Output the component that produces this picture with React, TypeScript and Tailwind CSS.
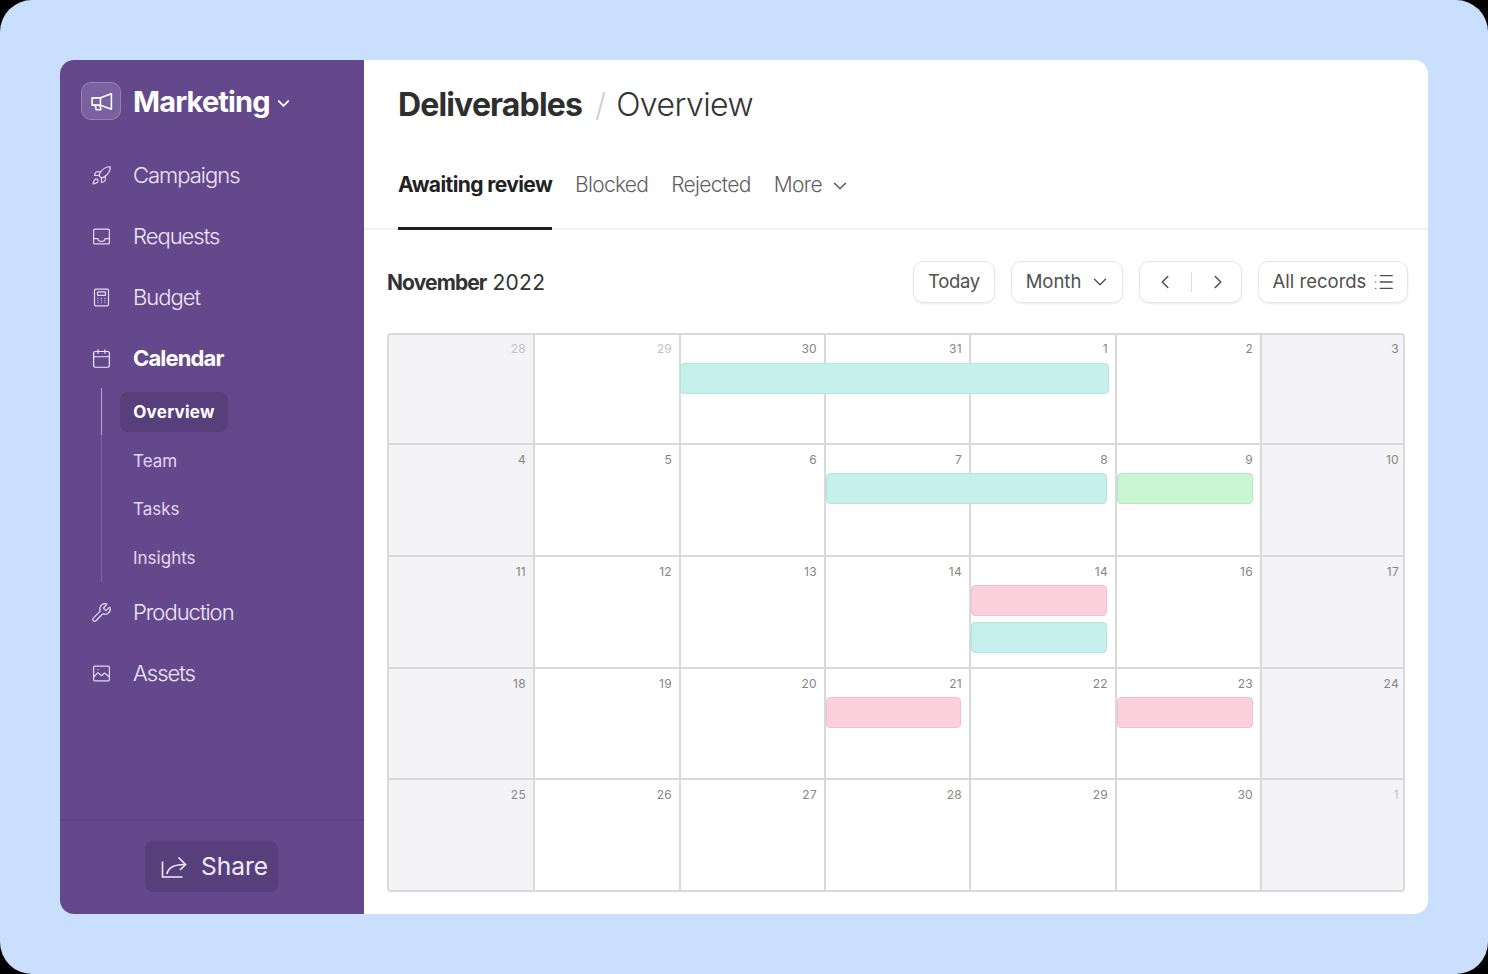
import { Calendar, ChevronDown, ChevronLeft, ChevronRight, List, Rocket, Wrench } from "lucide-react";
import type { SVGProps } from "react";

type IconProps = { size?: number; strokeWidth?: number; className?: string };

function Base({ size = 21, strokeWidth = 1.5, className, children }: IconProps & SVGProps<SVGSVGElement>) {
  return (
    <svg
      width={size}
      height={size}
      viewBox="0 0 24 24"
      fill="none"
      stroke="currentColor"
      strokeWidth={strokeWidth}
      strokeLinejoin="round"
      strokeLinecap="round"
      className={className}
    >
      {children}
    </svg>
  );
}

function InboxIcon(props: IconProps) {
  return (
    <Base {...props}>
      <rect x="3" y="3.5" width="18" height="17" rx="1.5" />
      <path d="M3 14.5H8C8 16.5 9.5 17.5 12 17.5C14.5 17.5 16 16.5 16 14.5H21" />
    </Base>
  );
}

function CalcIcon(props: IconProps) {
  return (
    <Base {...props}>
      <rect x="4" y="2.5" width="16" height="19" rx="1.5" />
      <rect x="7.5" y="5.5" width="9" height="4" rx="0.5" />
      <path d="M8 13h.01M12 13h.01M16 13h.01M8 15.5h.01M12 15.5h.01M16 15.5h.01M8 18h.01M12 18h.01M16 18h.01" />
    </Base>
  );
}

function ImageIcon(props: IconProps) {
  return (
    <Base {...props}>
      <rect x="3" y="3.5" width="18" height="17" rx="1.5" />
      <path d="M3 16L8 11L12 14.5L15.5 11.5L21 16" />
      <path d="M8 7.5h.01" />
    </Base>
  );
}

function MegaphoneIcon(props: IconProps) {
  return (
    <Base {...props}>
      <path d="M3 8.5H11L21.5 4.5V19.5L11 15.5H3Z" />
      <path d="M11 8.5V15.5" />
      <path d="M6 15.5L7 20H11.5L10.5 15.5" />
    </Base>
  );
}

const navTop = [
  { label: "Campaigns", icon: Rocket },
  { label: "Requests", icon: InboxIcon },
  { label: "Budget", icon: CalcIcon },
];

const navBottom = [
  { label: "Production", icon: Wrench },
  { label: "Assets", icon: ImageIcon },
];

const subNav = ["Team", "Tasks", "Insights"];

const teal = "bg-[#c5f0ec] border-[#b4e3df]";
const pink = "bg-[#fdd0de] border-[#f0bfd0]";
const green = "bg-[#c8f5d2] border-[#b6e6c2]";

type Cell = {
  n: number;
  muted?: boolean;
  off?: boolean;
  bars?: { cls: string; top: string; width: string }[];
};

const rows: { h: string; cells: Cell[] }[] = [
  {
    h: "h-[108px]",
    cells: [
      { n: 28, muted: true, off: true },
      { n: 29, muted: true },
      { n: 30, bars: [{ cls: teal, top: "top-[28px]", width: "w-[429px] -left-px" }] },
      { n: 31 },
      { n: 1 },
      { n: 2 },
      { n: 3, off: true },
    ],
  },
  {
    h: "h-[112px]",
    cells: [
      { n: 4, off: true },
      { n: 5 },
      { n: 6 },
      { n: 7, bars: [{ cls: teal, top: "top-[28px]", width: "w-[281px] left-0" }] },
      { n: 8 },
      { n: 9, bars: [{ cls: green, top: "top-[28px]", width: "w-[136px] left-0" }] },
      { n: 10, off: true },
    ],
  },
  {
    h: "h-[112px]",
    cells: [
      { n: 11, off: true },
      { n: 12 },
      { n: 13 },
      { n: 14 },
      {
        n: 14,
        bars: [
          { cls: pink, top: "top-[28px]", width: "w-[136px] left-0" },
          { cls: teal, top: "top-[65px]", width: "w-[136px] left-0" },
        ],
      },
      { n: 16 },
      { n: 17, off: true },
    ],
  },
  {
    h: "h-[111px]",
    cells: [
      { n: 18, off: true },
      { n: 19 },
      { n: 20 },
      { n: 21, bars: [{ cls: pink, top: "top-[28px]", width: "w-[135px] left-0" }] },
      { n: 22 },
      { n: 23, bars: [{ cls: pink, top: "top-[28px]", width: "w-[136px] left-0" }] },
      { n: 24, off: true },
    ],
  },
  {
    h: "h-[112px]",
    cells: [
      { n: 25, off: true },
      { n: 26 },
      { n: 27 },
      { n: 28 },
      { n: 29 },
      { n: 30 },
      { n: 1, muted: true, off: true },
    ],
  },
];

function NavItem({ label, icon: Icon }: { label: string; icon: typeof InboxIcon | typeof Rocket }) {
  return (
    <div className="flex h-[61px] items-center pl-[31px] text-[22px] font-light tracking-[-1px] text-[#f0e6fa]">
      <Icon size={21} strokeWidth={1.4} className="text-[#e6d6f7]" />
      <span className="ml-[21px]">{label}</span>
    </div>
  );
}

function ShareIcon() {
  return (
    <svg width="26" height="24" viewBox="0 0 26 24" fill="none" stroke="currentColor" strokeWidth="1.6">
      <path d="M1.5 6.5V22H21.5" />
      <path d="M6 19C7 13 12 9.5 23.5 9.5" />
      <path d="M17.5 2.5L24.5 9.5L19 15" />
    </svg>
  );
}

export default function App() {
  return (
    <div className="h-[974px] w-[1488px] bg-black font-['Inter',sans-serif]">
      <div className="h-full w-full rounded-[32px] bg-[#c9dffd] p-[60px]">
        <div className="flex h-[854px] overflow-hidden rounded-[14px] bg-white">
          {/* Sidebar */}
          <aside className="flex w-[304px] shrink-0 flex-col bg-[#63498b]">
            <div className="flex h-[82px] items-center pl-[21px]">
              <div className="flex h-[38px] w-[40px] items-center justify-center rounded-[10px] border border-[#9683b3] bg-[#7a62a0]">
                <MegaphoneIcon size={25} strokeWidth={1.5} className="text-white" />
              </div>
              <span className="ml-[12px] mt-[1px] text-[29px] font-bold tracking-[-0.85px] text-white">Marketing</span>
              <ChevronDown size={19} strokeWidth={2.4} className="ml-[4px] mt-[5px] text-white" />
            </div>

            <nav className="mt-[3px] flex-1">
              {navTop.map((item) => (
                <NavItem key={item.label} {...item} />
              ))}

              <div className="flex h-[60px] items-center pl-[31px] text-[22px] font-bold tracking-[-0.85px] text-white">
                <Calendar size={21} strokeWidth={1.4} className="text-[#f1e8fb]" />
                <span className="ml-[21px]">Calendar</span>
              </div>

              <div className="relative ml-[41px] flex h-[194px] flex-col border-l border-[#7d67a1] pt-[4px]">
                <span className="absolute -left-px top-0 h-[47px] w-px bg-[#b5a5cd]" />
                <div className="mb-[5px] ml-[18px] flex h-[40px] w-[108px] shrink-0 items-center justify-center rounded-[8px] bg-[#563f7b] pt-[2px] text-[17px] font-bold tracking-[0.25px] text-white">
                  Overview
                </div>
                {subNav.map((label) => (
                  <div
                    key={label}
                    className="ml-[31px] flex h-[48.5px] shrink-0 items-center text-[17px] text-[#e4d7f2]"
                  >
                    {label}
                  </div>
                ))}
              </div>

              {navBottom.map((item) => (
                <NavItem key={item.label} {...item} />
              ))}
            </nav>

            <div className="flex h-[95px] items-center justify-center border-t-2 border-[#5a4281] pb-[2px] pr-[1px]">
              <button className="flex h-[51px] w-[133px] items-center justify-center gap-[14px] rounded-[8px] bg-[#563f7b] pl-[6px] text-[24.5px] text-[#f2eafa]">
                <ShareIcon />
                Share
              </button>
            </div>
          </aside>

          {/* Main */}
          <main className="flex min-w-0 flex-1 flex-col">
            <header className="h-[170px] shrink-0 border-b-2 border-[#f0f0f0] pl-[34px]">
              <div className="flex items-center pt-[24px] text-[32px] leading-[42px]">
                <span className="font-bold tracking-[-0.85px] text-[#2e2e2e]">Deliverables</span>
                <span className="ml-[13px] mr-[10px] font-light text-[#cfcfcf]">/</span>
                <span className="font-light tracking-[-0.55px] text-[#333333]">Overview</span>
              </div>
              <div className="mt-[36px] flex text-[21px] font-light text-[#5f5f5f]">
                <div className="flex h-[68px] w-[154px] items-start whitespace-nowrap border-b-[3px] border-[#1f1f1f] pt-[7px] font-bold tracking-[-0.6px] text-[#222222]">
                  Awaiting review
                </div>
                <span className="ml-[23px] pt-[7px] tracking-[-0.7px]">Blocked</span>
                <span className="ml-[23px] pt-[7px] tracking-[-0.7px]">Rejected</span>
                <span className="ml-[23px] pt-[7px] tracking-[-0.6px]">More</span>
                <ChevronDown size={22} strokeWidth={1.5} className="ml-[7px] mt-[13px] text-[#555555]" />
              </div>
            </header>

            <div className="flex items-center justify-between pl-[23px] pr-[20px] pt-[31px]">
              <h2 className="mt-[2px] text-[21px] text-[#333333]">
                <span className="font-bold tracking-[-0.9px]">November</span>{" "}
                <span className="tracking-[0.3px]">2022</span>
              </h2>
              <div className="flex items-center gap-[16px] text-[18.5px] text-[#4f4f4f]">
                <button className="flex h-[42px] w-[82px] items-center justify-center rounded-[10px] border border-[#e5e5e5] tracking-[-0.3px] shadow-[0_1px_2px_rgba(0,0,0,0.08)]">
                  Today
                </button>
                <button className="flex h-[42px] w-[112px] items-center justify-center gap-[8px] rounded-[10px] border border-[#e5e5e5] pl-[3px] shadow-[0_1px_2px_rgba(0,0,0,0.08)]">
                  Month
                  <ChevronDown size={22} strokeWidth={1.5} />
                </button>
                <div className="flex h-[42px] w-[103px] items-center justify-center rounded-[10px] border border-[#e5e5e5] pl-[2px] shadow-[0_1px_2px_rgba(0,0,0,0.08)]">
                  <ChevronLeft size={22} strokeWidth={1.7} />
                  <span className="mx-[15px] h-[20px] w-px bg-[#dddddd]" />
                  <ChevronRight size={22} strokeWidth={1.7} />
                </div>
                <button className="flex h-[42px] w-[150px] items-center justify-center gap-[7px] rounded-[10px] border border-[#e5e5e5] pl-[2px] shadow-[0_1px_2px_rgba(0,0,0,0.08)]">
                  All records
                  <List size={22} strokeWidth={1.5} />
                </button>
              </div>
            </div>

            {/* Calendar */}
            <div className="ml-[23px] mt-[30px] w-[1018px] overflow-hidden rounded-[4px] border-2 border-[#d9d9d9]">
              {rows.map((row, r) => (
                <div
                  key={r}
                  className={`grid grid-cols-[146px_146px_145px_145px_146px_145px_141px] ${row.h} ${
                    r > 0 ? "border-t-2 border-[#d9d9d9]" : ""
                  }`}
                >
                  {row.cells.map((cell, c) => (
                    <div
                      key={c}
                      className={`relative text-right text-[12px] leading-[14px] tracking-[0.3px] ${
                        r > 0 ? "pt-[8px]" : "pt-[7px]"
                      } ${c < 6 ? "border-r-2 border-[#d9d9d9] pr-[7px]" : "pr-[4px]"} ${
                        cell.off ? "bg-[#f4f4f6]" : "bg-white"
                      } ${cell.muted ? "text-[#c2c2c2]" : "text-[#858585]"}`}
                    >
                      {cell.n}
                      {cell.bars?.map((bar, b) => (
                        <div
                          key={b}
                          className={`absolute z-10 h-[31px] rounded-[4px] border ${bar.cls} ${bar.top} ${bar.width}`}
                        />
                      ))}
                    </div>
                  ))}
                </div>
              ))}
            </div>
          </main>
        </div>
      </div>
    </div>
  );
}
